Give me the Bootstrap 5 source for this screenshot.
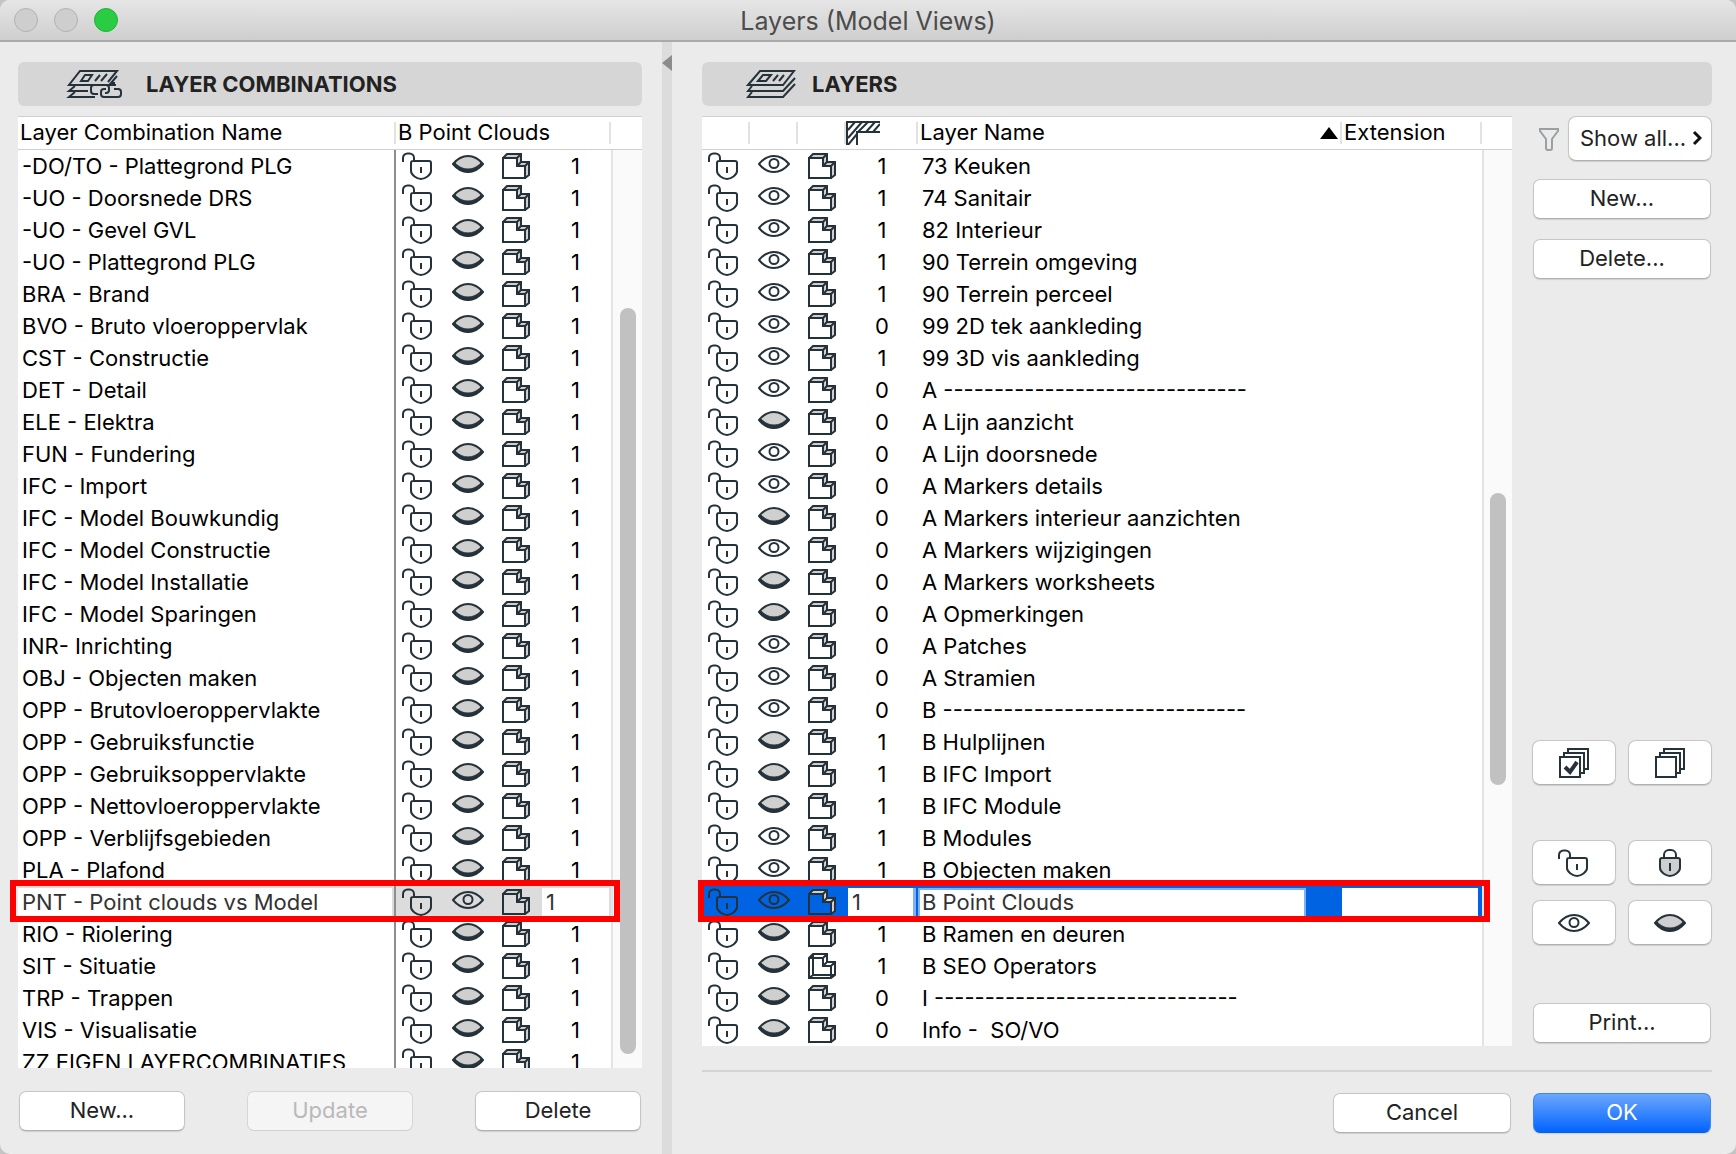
<!DOCTYPE html>
<html lang="en">
<head>
<meta charset="utf-8">
<meta name="viewport" content="width=device-width, initial-scale=1">
<title>Layers (Model Views)</title>
<link href="https://cdn.jsdelivr.net/npm/bootstrap@5.3.0/dist/css/bootstrap.min.css" rel="stylesheet">
<style>
  :root { --ink: #26323a; }
  body { font-family: Inter, "Liberation Sans", sans-serif; font-size: 22px; line-height: 32px; color: #000; background: #c4c4c4; }
  svg { display: block; fill: none; stroke: var(--ink); stroke-width: 2; flex: none; }
  .window { height: 100vh; background: #ebebeb; border-radius: 10px; overflow: hidden; }
  .fill { flex: 1 1 0; min-height: 0; }
  .titlebar { height: 42px; background: linear-gradient(#e6e6e6, #cecece); border-bottom: 2px solid #aaa; }
  .titlebar h1 { font-size: 25px; line-height: 42px; font-weight: 400; color: #4c4c4c; }
  .lights { left: 14px; top: 8px; gap: 16px; }
  .light { width: 24px; height: 24px; padding: 0; border: 1px solid #b1b1b1; border-radius: 50%; background: #cecece; }
  .light.zoom { background: #29cc42; border-color: #1fb236; }
  .combos { width: 662px; padding: 20px 20px 23px 18px; }
  .splitter { width: 10px; background: #dcdcdc; padding: 13px 0; }
  .layers { padding: 20px 24px 21px 30px; }
  .heading { height: 44px; background: #d6d6d6; border-radius: 6px; margin-bottom: 10px; }
  .heading h2 { font-size: 22px; line-height: 44px; font-weight: 700; color: #222; }
  .layers .heading { padding-left: 44px; }
  .list-clip { background: #fff; overflow: hidden; height: 100%; }
  .grid { width: 100%; table-layout: fixed; border-collapse: separate; border-spacing: 0; }
  .grid th, .grid td { padding: 0; font-weight: 400; white-space: nowrap; overflow: hidden; }
  .grid th { height: 34px; border-top: 1px solid #d0d0d0; border-bottom: 1px solid #d0d0d0; line-height: 20px; }
  .grid th > div { height: 22px; border-right: 2px solid #e2e2e2; padding: 0 2px; display: flex; justify-content: space-between; }
  .grid th svg { align-self: center; }
  .grid th > .corner { padding-left: 0; }
  .grid th:last-child > div { border: 0; }
  .grid td { height: 32px; line-height: 32px; }
  .grid td.title { padding-left: 4px; }
  .combos .grid td.title { border-right: 2px solid #8e8e8e; }
  .grid td.track { background: #fafafa; border-left: 2px solid #e4e4e4; }
  .grid td.num { text-align: center; }
  .grid .pos-lock { padding-left: 4px; }
  .grid .pos-eye { padding-left: 8px; }
  .grid .pos-box { padding-left: 10px; }
  .pos-eye svg { margin-top: -4px; }
  .cell-input { display: block; width: 100%; height: 30px; margin-top: 2px; padding: 0 4px 3px; border: 0; border-radius: 0; background: #fff; color: #333; outline: 0; }
  .combos .num { padding-right: 2px; }
  .combos tr.selected td { background: #dcdcdc; }
  .combos tr.selected td.title { padding: 0 2px 0 0; }
  .layers tr.selected td { background: #0063e1; }
  .layers tr.selected td.title { padding: 0 36px 0 0; }
  .layers tr.selected td.num { padding: 0 2px; }
  .layers tr.selected .num .cell-input { border-right: 3px solid #7fb1f8; }
  .layers tr.selected .title .cell-input { border: 2px solid #7fb1f8; padding: 0 2px 3px; }
  .layers tr.selected .ext { padding-right: 4px; }
  .grid tr.selected td.track { background: #fafafa; }
  .thumb { width: 16px; border-radius: 8px; background: #c1c1c1; right: 6px; }
  .combos .thumb { top: 192px; bottom: 14px; }
  .layers .thumb { top: 377px; height: 292px; }
  .marker { border: 6px solid #f00; height: 42px; top: 764px; right: 22px; pointer-events: none; }
  .combos .marker { left: -8px; }
  .layers .marker { left: -4px; }
  .mac { --bs-btn-bg: #fff; --bs-btn-color: #222; --bs-btn-hover-bg: #f4f4f4; --bs-btn-border-color: #c6c6c6; --bs-btn-disabled-bg: #f5f5f5; --bs-btn-disabled-color: #b9b9b9; --bs-btn-disabled-border-color: #d6d6d6; --bs-btn-disabled-opacity: 1;
    height: 40px; padding: 0 0 2px; font-size: 22px; line-height: 36px; border-radius: 7px; border-bottom-color: #b0b0b0; box-shadow: 0 1px 1px rgba(0,0,0,.12); }
  .mac:disabled { border-bottom-color: #d0d0d0; box-shadow: none; }
  .mac.tall { height: 45px; border-radius: 8px; }
  .mac.pair { width: 84px; padding: 0; display: flex; align-items: center; justify-content: center; }
  .mac.filter { width: 144px; padding: 0 9px 2px 11px; }
  .mac.ok { --bs-btn-color: #fff; --bs-btn-hover-color: #fff; background: linear-gradient(#6ca7fb, #0264fe); border-color: #3d86f5; border-bottom-color: #0a5fe8; }
  .foot-left { padding: 23px 1px 0; }
  .foot-left .mac { width: 166px; }
  .tools { width: 180px; margin-left: 20px; }
  .funnel { stroke: #9a9fa3; margin-left: 6px; }
  .wide { width: 178px; }
  .rule { height: 2px; background: #d4d4d4; margin-top: 24px; }
  .foot-right { padding: 21px 1px 0; gap: 22px; }
  .gap-a { margin-top: 18px; } .gap-b { margin-top: 20px; } .gap-c { margin-top: 55px; } .gap-d { margin-top: 15px; }
  .print { margin-top: 58px; margin-bottom: 3px; }
</style>
</head>
<body>
<svg width="0" height="0" class="position-absolute" aria-hidden="true">
  <symbol id="unlock" viewBox="0 0 32 30"><path d="M3 11V7a4.500 4.500 0 0 1 4.500-4.500h2A4.500 4.500 0 0 1 14 7v3M13 10h16a2 2 0 0 1 2 2v8c0 4-6 8-10 8s-10-4-10-8v-8a2 2 0 0 1 2-2zM21 16v6"/></symbol>
  <symbol id="locked" viewBox="0 0 24 30"><path d="M6 10V7a5 5 0 0 1 5-5h2a5 5 0 0 1 5 5v3"/><path fill="#cfcfcf" d="M4 10h16a2 2 0 0 1 2 2v8c0 4-6 8-10 8S2 24 2 20v-8a2 2 0 0 1 2-2z"/><path d="M12 15v8"/></symbol>
  <symbol id="eye" viewBox="0 0 32 18"><path d="M1 9c5-6 10-8 15-8s10 2 15 8c-5 6-10 8-15 8S6 15 1 9z"/><circle cx="16" cy="8.500" r="4.500"/></symbol>
  <symbol id="shut" viewBox="0 0 32 18"><path fill="#cfcfcf" d="M1 9c5-6 10-8 15-8s10 2 15 8c-5 6-10 8-15 8S6 15 1 9z"/><path fill="#26323a" stroke-width="1" d="M1 9l2-1c4 4 8 6 13 6s9-2 13-6l2 1c-5 6-10 8-15 8S6 15 1 9z"/></symbol>
  <symbol id="solid" viewBox="0 0 28 26"><path fill="#cfcfcf" d="M1 5l4-4h14v8h8v13l-4 3z"/><path fill="#fff" d="M1 5h14v8h8v12H1z"/><path d="M15 5l4-4M15 13l4-4M23 13l4-4"/></symbol>
  <symbol id="solid-sel" viewBox="0 0 28 26"><path fill="#cfcfcf" d="M1 5l4-4h14v8h8v13l-4 3z"/><path class="face" d="M1 5h14v8h8v12H1z"/><path d="M15 5l4-4M15 13l4-4M23 13l4-4"/></symbol>
  <symbol id="wire" viewBox="0 0 28 26"><path d="M1 5l4-4h14v8h8v13l-4 3H1zM1 5h14v8h8v12M15 5l4-4M15 13l4-4M23 13l4-4M5 1v21h22M1 25l4-3"/></symbol>
</svg>

<main class="window d-flex flex-column">
  <header class="titlebar position-relative text-center flex-shrink-0">
    <div class="lights position-absolute d-flex">
      <button class="light" aria-label="Close"></button><button class="light" aria-label="Minimise"></button><button class="light zoom" aria-label="Zoom"></button>
    </div>
    <h1 class="m-0">Layers (Model Views)</h1>
  </header>

  <div class="fill d-flex">
    <section class="combos d-flex flex-column flex-shrink-0">
      <div class="heading d-flex align-items-center flex-shrink-0">
        <svg class="ms-5 me-4" width="56" height="28" viewBox="-2 0 56 28"><path d="M48 15H1L12 1h37L40 12M49 6l-6 7h4M13 11l4-6h7l-4 6zM27 11l5-6M33 11l6-7M7 16l-6 5h19M7 22l-6 5h26"/><path d="M30 24h-4a3 3 0 0 1-3-3v-3a3 3 0 0 1 3-3h12a3 3 0 0 1 3 3v2a3 3 0 0 1-3 3h-1M38 19h-2a3 3 0 0 0-3 3v2a3 3 0 0 0 3 3h14a3 3 0 0 0 3-3v-2a3 3 0 0 0-3-3h-4"/></svg>
        <h2 class="m-0">LAYER COMBINATIONS</h2>
      </div>
      <div class="fill position-relative">
        <div class="list-clip">
          <table class="grid">
            <colgroup><col><col style="width:48px"><col style="width:48px"><col style="width:50px"><col style="width:69px"><col style="width:31px"></colgroup>
            <thead><tr><th><div>Layer Combination Name</div></th><th colspan="4"><div>B Point Clouds</div></th><th><div></div></th></tr></thead>
            <tbody id="comboRows"></tbody>
          </table>
        </div>
        <div class="thumb position-absolute"></div>
        <div class="marker position-absolute"></div>
      </div>
      <div class="foot-left d-flex justify-content-between flex-shrink-0">
        <button class="btn mac">New...</button><button class="btn mac" disabled>Update</button><button class="btn mac">Delete</button>
      </div>
    </section>

    <div class="splitter flex-shrink-0"><svg width="10" height="16" viewBox="0 0 10 16"><path d="M10 0v16L0 8z" fill="#8c8c8c" stroke="none"/></svg></div>

    <section class="layers d-flex flex-column flex-grow-1">
      <div class="heading d-flex align-items-center flex-shrink-0">
        <svg class="me-3" width="50" height="28" viewBox="0 0 50 28"><path d="M2 15L14 1h34L37 15zM12 11l5-6h8l-5 6zM27 11l5-6M33 11l5-6M6 16l-4 5h35L49 8M6 22l-4 5h35L49 14"/></svg>
        <h2 class="m-0">LAYERS</h2>
      </div>
      <div class="fill d-flex">
        <div class="position-relative flex-grow-1">
          <div class="list-clip">
            <table class="grid">
              <colgroup><col style="width:48px"><col style="width:48px"><col style="width:48px"><col style="width:72px"><col><col style="width:140px"><col style="width:30px"></colgroup>
              <thead><tr><th><div></div></th><th><div></div></th><th><div></div></th>
                <th><div class="corner"><svg width="34" height="24" viewBox="0 0 34 24"><path d="M34 1H1v23M34 11H11v13M2 9l7-8M2 17L16 1M2 24l9-11M12 11l10-10M20 11l9-10M27 11l7-8"/></svg></div></th>
                <th><div>Layer Name<svg width="18" height="12" viewBox="0 0 18 12"><path d="M9 0l9 12H0z" fill="#000" stroke="none"/></svg></div></th>
                <th><div>Extension</div></th><th><div></div></th></tr></thead>
              <tbody id="layerRows"></tbody>
            </table>
          </div>
          <div class="thumb position-absolute"></div>
          <div class="marker position-absolute"></div>
        </div>
        <div class="tools d-flex flex-column flex-shrink-0">
          <div class="d-flex align-items-center justify-content-between">
            <svg class="funnel" width="22" height="24" viewBox="0 0 22 24"><path d="M2 2h18v2l-6 8v9q0 2-2 2h-2q-2 0-2-2v-9L2 4z"/></svg>
            <button class="btn mac tall filter d-flex align-items-center justify-content-between">Show all...<svg width="10" height="16" viewBox="0 0 10 16"><path d="M2 2l6 6-6 6" stroke="#111" stroke-width="3"/></svg></button>
          </div>
          <button class="btn mac wide mx-auto gap-a">New...</button>
          <button class="btn mac wide mx-auto gap-b">Delete...</button>
          <div class="mt-auto d-flex justify-content-between">
            <button class="btn mac tall pair" aria-label="Select all"><svg width="32" height="32" viewBox="0 0 32 32"><path d="M10 6V2h20v20h-4M6 10V6h20v20h-4M2 10h20v20H2z"/><path d="M7 20l5 5 7-10" stroke-width="4"/></svg></button>
            <button class="btn mac tall pair" aria-label="Deselect all"><svg width="32" height="32" viewBox="0 0 32 32"><path d="M10 6V2h20v20h-4M6 10V6h20v20h-4M2 10h20v20H2z"/></svg></button>
          </div>
          <div class="d-flex justify-content-between gap-c">
            <button class="btn mac tall pair" aria-label="Unlock"><svg class="me-1" width="32" height="30"><use href="#unlock"/></svg></button>
            <button class="btn mac tall pair" aria-label="Lock"><svg width="24" height="30"><use href="#locked"/></svg></button>
          </div>
          <div class="d-flex justify-content-between gap-d">
            <button class="btn mac tall pair" aria-label="Show"><svg width="32" height="18"><use href="#eye"/></svg></button>
            <button class="btn mac tall pair" aria-label="Hide"><svg width="32" height="18"><use href="#shut"/></svg></button>
          </div>
          <button class="btn mac wide mx-auto print">Print...</button>
        </div>
      </div>
      <div class="rule flex-shrink-0"></div>
      <div class="foot-right d-flex justify-content-end flex-shrink-0">
        <button class="btn mac wide">Cancel</button><button class="btn mac ok wide">OK</button>
      </div>
    </section>
  </div>
</main>
<script src="https://cdn.jsdelivr.net/npm/bootstrap@5.3.0/dist/js/bootstrap.bundle.min.js"></script>
<script>
  const combos = ['-DO/TO - Plattegrond PLG','-UO - Doorsnede DRS','-UO - Gevel GVL','-UO - Plattegrond PLG','BRA - Brand','BVO - Bruto vloeroppervlak','CST - Constructie','DET - Detail','ELE - Elektra','FUN - Fundering','IFC - Import','IFC - Model Bouwkundig','IFC - Model Constructie','IFC - Model Installatie','IFC - Model Sparingen','INR- Inrichting','OBJ - Objecten maken','OPP - Brutovloeroppervlakte','OPP - Gebruiksfunctie','OPP - Gebruiksoppervlakte','OPP - Nettovloeroppervlakte','OPP - Verblijfsgebieden','PLA - Plafond','PNT - Point clouds vs Model','RIO - Riolering','SIT - Situatie','TRP - Trappen','VIS - Visualisatie','ZZ EIGEN LAYERCOMBINATIES'];
  const dashes = '-'.repeat(30);
  // name, intersection group, visible
  const layers = [['73 Keuken',1,1],['74 Sanitair',1,1],['82 Interieur',1,1],['90 Terrein omgeving',1,1],['90 Terrein perceel',1,1],['99 2D tek aankleding',0,1],['99 3D vis aankleding',1,1],['A '+dashes,0,1],['A Lijn aanzicht',0,0],['A Lijn doorsnede',0,1],['A Markers details',0,1],['A Markers interieur aanzichten',0,0],['A Markers wijzigingen',0,1],['A Markers worksheets',0,0],['A Opmerkingen',0,0],['A Patches',0,1],['A Stramien',0,1],['B '+dashes,0,1],['B Hulplijnen',1,0],['B IFC Import',1,0],['B IFC Module',1,0],['B Modules',1,1],['B Objecten maken',1,1],['B Point Clouds',1,1],['B Ramen en deuren',1,0],['B SEO Operators',1,0],['I '+dashes,0,0],['Info -\u00a0 SO/VO',0,0]];
  const icon = (id, w, h) => `<svg width="${w}" height="${h}"><use href="#${id}"/></svg>`;
  const icons = (open, box) => `<td class="pos-lock">${icon('unlock',32,30)}</td><td class="pos-eye">${icon(open ? 'eye' : 'shut',32,18)}</td><td class="pos-box">${icon(box,28,26)}</td>`;
  const field = (v, label) => `<input class="cell-input" type="text" value="${v}" aria-label="${label}">`;
  comboRows.innerHTML = combos.map(n => {
    const s = n.startsWith('PNT');
    return `<tr class="${s ? 'selected' : ''}"><td class="title">${s ? field(n,'Layer combination name') : n}</td>${icons(s, s ? 'solid-sel' : 'solid')}<td class="num">${s ? field(1,'Intersection group') : 1}</td><td class="track"></td></tr>`;
  }).join('');
  layerRows.innerHTML = layers.map(([n, g, v]) => {
    const s = n === 'B Point Clouds';
    // the selected row shows its background through the front face of the solid
    const box = n === 'B SEO Operators' ? 'wire' : 'solid';
    return `<tr class="${s ? 'selected' : ''}">${icons(v, s ? 'solid-sel' : box)}<td class="num">${s ? field(g,'Intersection group') : g}</td><td class="title">${s ? field(n,'Layer name') : n}</td><td class="ext">${s ? field('','Extension') : ''}</td><td class="track"></td></tr>`;
  }).join('');
  // paint the see-through face in the colour of the selected row
  document.querySelectorAll('tr.selected .pos-box svg').forEach(s => {
    const c = getComputedStyle(s.parentNode).backgroundColor;
    s.innerHTML = document.getElementById('solid-sel').innerHTML.replace('class="face"', `fill="${c}"`);
    s.setAttribute('viewBox', '0 0 28 26');
  });
</script>
</body>
</html>
